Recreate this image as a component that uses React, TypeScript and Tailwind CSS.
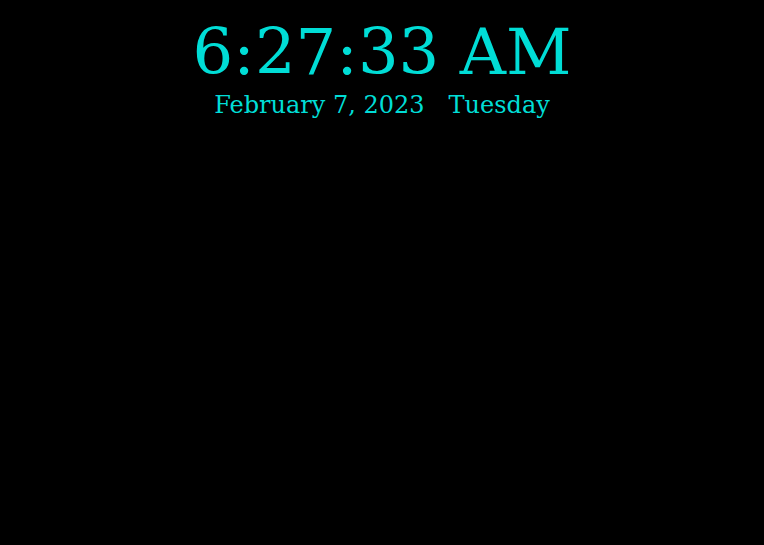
export default function App() {
  return (
    <div className="flex min-h-[545px] w-full flex-col items-center bg-black pt-[14px] text-[#00ddd6] [font-family:'DejaVu_Serif',serif]">
      <div className="text-[64px] leading-[76px]">6:27:33 AM</div>
      <div className="mt-px flex gap-6 text-[24px] leading-[28px]">
        <span>February 7, 2023</span>
        <span>Tuesday</span>
      </div>
    </div>
  );
}
